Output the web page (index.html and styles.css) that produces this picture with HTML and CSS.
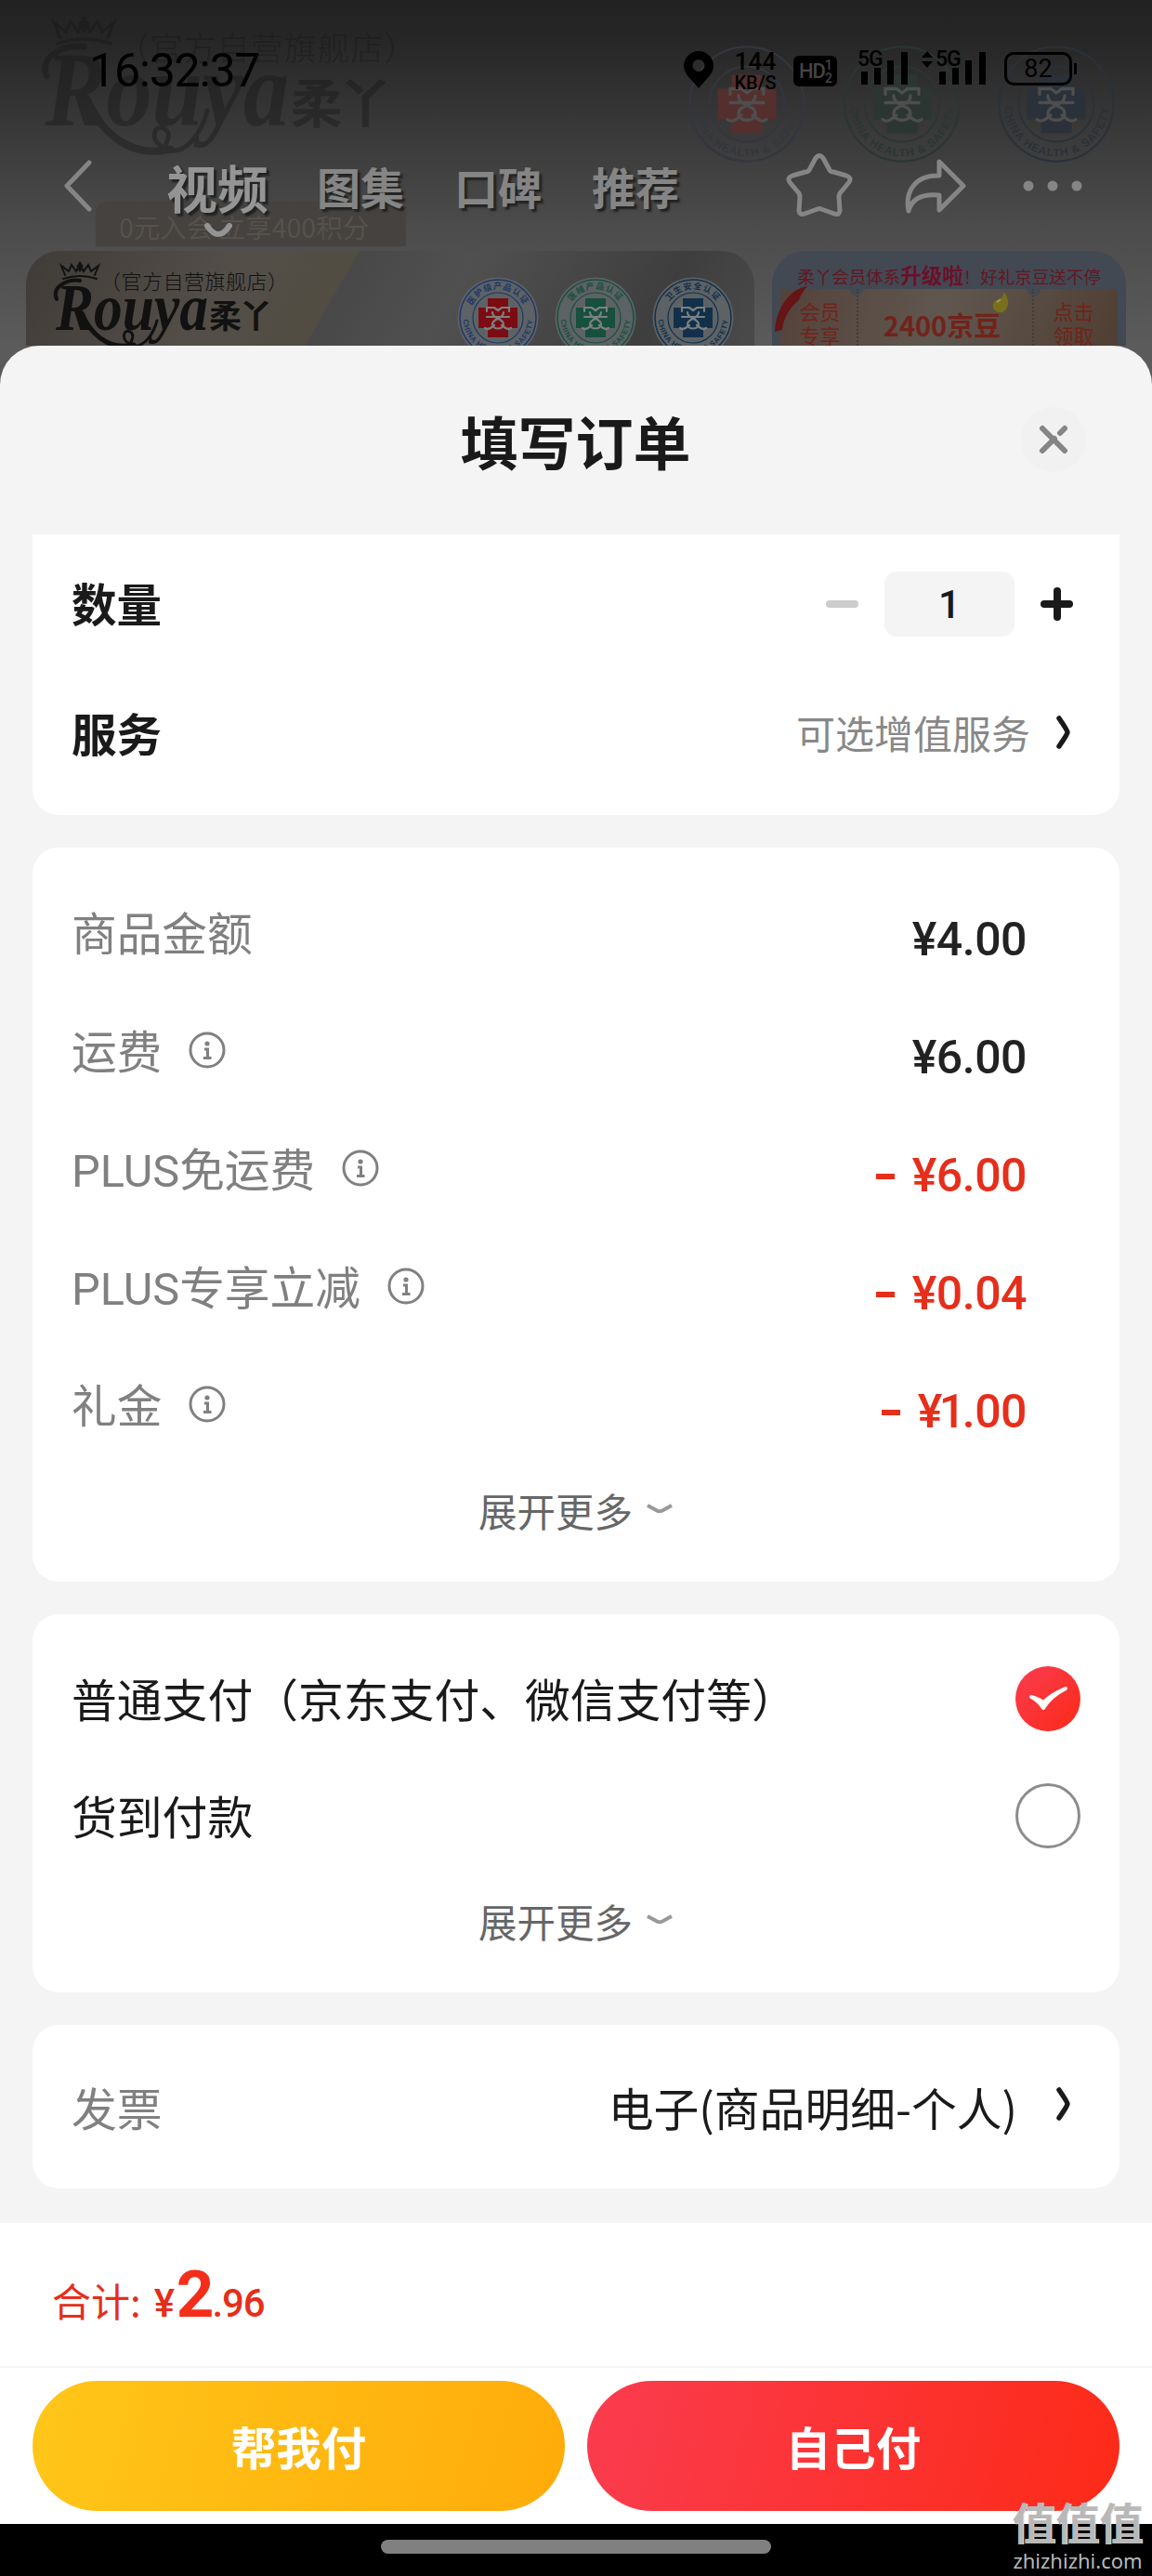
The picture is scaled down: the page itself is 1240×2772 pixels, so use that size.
FILE: index.html
```html
<!DOCTYPE html>
<html lang="zh-CN">
<head>
    <meta charset="UTF-8">
    <meta name="viewport" content="width=device-width, initial-scale=1.0">
    <title>填写订单</title>
    <link rel="stylesheet" href="styles.css">
</head>
<body>
    <svg class="defs" width="0" height="0">
        <defs>
            <path id="arcTop" d="M13 44a31 31 0 0 1 62 0"/>
            <path id="arcBottom" d="M6.500 44a37.500 37.500 0 0 0 75 0"/>
            <symbol id="badge" viewBox="0 0 88 88">
                <circle class="badge-disc" cx="44" cy="44" r="43.500"/>
                <circle cx="44" cy="44" r="41" fill="none" stroke="currentColor" stroke-width="1.500"/>
                <circle cx="44" cy="44" r="27" fill="none" stroke="currentColor" stroke-width="1.200"/>
                <path class="badge-cross" d="M33 23h22v10h10v22H55v10H33V55H23V33h10z"/>
                <path class="badge-mark" d="M32 37v-4h8l4 3 4-3h8v4M32 43h24M38 38c0 8 12 6 12 13 0 6-12 6-12 0 0-7 12-5 12-13M30 55c4 3 7-1 10-3M58 55c-4 3-7-1-10-3"/>
                <text class="badge-en"><textPath href="#arcBottom" startOffset="50%" text-anchor="middle">CHINA HEALTH &amp; SAFETY</textPath></text>
            </symbol>
            <symbol id="logo" viewBox="0 0 250 110">
                <g fill="none" stroke="currentColor" stroke-width="2" stroke-linecap="round">
                    <path d="M16 20q18-6 36 0M18 16l-4-10 8 6 3-7 5 7 4-8 4 8 5-7 3 7 8-6-4 10"/>
                    <path d="M34 3v8M32 6h4" stroke-width="3"/>
                    <path d="M36 57C44 76 62 98 92 91" stroke-width="5"/>
                    <path d="M92 91c-15-2-12-18-4-14 8 5-4 14 3 15 12 2 22-12 26-27" stroke-width="3"/>
                    <path d="M9 42C3 28 22 20 34 22" stroke-width="4"/>
                </g>
                <text class="logo-en" x="8" y="75" textLength="164" lengthAdjust="spacingAndGlyphs">Rouya</text>
                <text class="logo-cn" x="173" y="73">柔丫</text>
                <text class="logo-shop" x="56" y="31" textLength="202">（官方自营旗舰店）</text>
            </symbol>
            <symbol id="info" viewBox="0 0 40 40">
                <circle cx="20" cy="20" r="18" fill="none" stroke="#808080" stroke-width="3"/>
                <circle cx="20" cy="13" r="2.600" fill="#808080"/>
                <path d="M17 19h3.500v9M16 28.500h8.500" fill="none" stroke="#808080" stroke-width="3"/>
            </symbol>
            <symbol id="right" viewBox="0 0 18 38">
                <path d="M4 4q9 13 9 15t-9 15" fill="none" stroke="#1a1a1a" stroke-width="5.500" stroke-linecap="round"/>
            </symbol>
            <symbol id="down" viewBox="0 0 30 14">
                <path d="M2 3l10 5.500q3 1.500 6 0L28 3" fill="none" stroke="#999" stroke-width="4"/>
            </symbol>
        </defs>
    </svg>

    <div class="page">
        <div class="shop">
            <!-- faded enlarged banner behind the navigation -->
            <div class="ghost">
                <svg class="ghost-logo"><use href="#logo"/></svg>
                <svg class="ghost-badge first red"><use href="#badge"/></svg>
                <svg class="ghost-badge second green"><use href="#badge"/></svg>
                <svg class="ghost-badge third blue"><use href="#badge"/></svg>
                <div class="ghost-pill">0元入会 立享400积分</div>
            </div>

            <div class="status-bar">
                <span class="clock">16:32:37</span>
                <div class="status-icons">
                    <svg class="pin" width="32" height="40" viewBox="0 0 32 40"><path fill-rule="evenodd" d="M16 0a16 16 0 0 1 16 16c0 9-9 15-16 24C9 31 0 25 0 16A16 16 0 0 1 16 0zm0 9a6.500 6.500 0 1 0 0 13 6.500 6.500 0 0 0 0-13z"/></svg>
                    <div class="speed"><b>144</b><span>KB/S</span></div>
                    <div class="hd"><span>HD</span><small>1<br>2</small></div>
                    <div class="signal">
                        <span>5G</span>
                        <svg width="50" height="35" viewBox="0 0 50 35"><path d="M0 21h7v14H0zM14 17h7v18h-7zM28 9h7v26h-7zM43 0h7v35h-7z"/></svg>
                    </div>
                    <div class="signal second-sim">
                        <svg class="updown" width="12" height="18" viewBox="0 0 12 18"><path d="M0 7l6-7 6 7zM0 11h12l-6 7z"/></svg>
                        <span>5G</span>
                        <svg width="50" height="35" viewBox="0 0 50 35"><path d="M0 21h7v14H0zM14 17h7v18h-7zM28 9h7v26h-7zM43 0h7v35h-7z"/></svg>
                    </div>
                    <div class="battery">82</div>
                </div>
            </div>

            <div class="nav">
                <svg class="back" width="32" height="56" viewBox="0 0 32 56"><path d="M28 3L4 28l24 25"/></svg>
                <div class="tab active">视频<svg width="30" height="16" viewBox="0 0 30 16"><path d="M3 3q12 18 24 0"/></svg></div>
                <div class="tab">图集</div>
                <div class="tab">口碑</div>
                <div class="tab">推荐</div>
                <svg class="star" width="72" height="70" viewBox="0 0 72 70"><path d="M32 6q4-5 8 0l7 13q1 2 4 2l14 4q6 2 3 7L58 44q-1 2-1 4l1 15q-1 5-6 3l-14-5q-2-1-4 0l-14 5q-5 2-6-3l1-15q0-2-1-4L4 32q-3-5 3-7l14-4q3 0 4-2z"/></svg>
                <svg class="share" width="68" height="60" viewBox="0 0 68 60"><path d="M38 4l26 26-26 26V40C18 38 8 45 5 57 1 36 12 18 38 19z"/></svg>
                <svg class="more" width="64" height="12" viewBox="0 0 64 12"><circle cx="6" cy="6" r="5.500"/><circle cx="32" cy="6" r="5.500"/><circle cx="58" cy="6" r="5.500"/></svg>
            </div>

            <div class="banners">
                <div class="banner brand">
                    <svg class="brand-logo"><use href="#logo"/></svg>
                    <svg class="badge red" viewBox="0 0 88 88"><use href="#badge" width="88" height="88"/><text class="badge-cn"><textPath href="#arcTop" startOffset="50%" text-anchor="middle">医护级产品认证</textPath></text></svg>
                    <svg class="badge green" viewBox="0 0 88 88"><use href="#badge" width="88" height="88"/><text class="badge-cn"><textPath href="#arcTop" startOffset="50%" text-anchor="middle">医械产品认证</textPath></text></svg>
                    <svg class="badge blue" viewBox="0 0 88 88"><use href="#badge" width="88" height="88"/><text class="badge-cn"><textPath href="#arcTop" startOffset="50%" text-anchor="middle">卫生安全认证</textPath></text></svg>
                </div>
                <div class="banner coupon">
                    <div class="coupon-title">柔丫会员体系<b>升级啦</b>！好礼京豆送不停</div>
                    <div class="ticket">
                        <svg class="ribbon" width="38" height="52" viewBox="0 0 38 52"><path d="M1 50C2 26 16 4 36 1c-4 5-7 9-9 15C16 25 10 36 9 48z" fill="#651515"/></svg>
                        <div class="ticket-side">会员<br>专享</div>
                        <div class="ticket-main">2400京豆</div>
                        <div class="ticket-side">点击<br>领取</div>
                        <svg class="bean" width="18" height="24" viewBox="0 0 18 24"><path d="M12 1c7 7 7 18-1 22C2 25-3 15 4 10c5 0 8-3 8-9z" fill="#79701b"/><path d="M5 12q2-1 4-3" stroke="#a19a55" stroke-width="2"/></svg>
                    </div>
                </div>
            </div>
        </div>

        <div class="sheet">
            <div class="sheet-header">
                <h1>填写订单</h1>
                <button class="close">
                    <svg width="32" height="32" viewBox="0 0 32 32"><path d="M4 4l24 24M4 28l13-13M23 9l5-5"/></svg>
                </button>
            </div>

            <div class="card goods">
                <div class="row">
                    <span class="label-bold">数量</span>
                    <div class="stepper">
                        <i class="minus"></i>
                        <span class="count">1</span>
                        <i class="plus"></i>
                    </div>
                </div>
                <div class="row">
                    <span class="label-bold">服务</span>
                    <div class="link"><span class="hint">可选增值服务</span><svg class="right"><use href="#right"/></svg></div>
                </div>
            </div>

            <div class="card fees">
                <div class="fee"><span>商品金额</span><b>¥4.00</b></div>
                <div class="fee"><span>运费</span><svg class="info"><use href="#info"/></svg><b>¥6.00</b></div>
                <div class="fee"><span>PLUS免运费</span><svg class="info"><use href="#info"/></svg><b class="minus-price"><i></i>¥6.00</b></div>
                <div class="fee"><span>PLUS专享立减</span><svg class="info"><use href="#info"/></svg><b class="minus-price"><i></i>¥0.04</b></div>
                <div class="fee"><span>礼金</span><svg class="info"><use href="#info"/></svg><b class="minus-price one"><i></i>¥<em>1</em>.00</b></div>
                <div class="expand">展开更多<svg><use href="#down"/></svg></div>
            </div>

            <div class="card payment">
                <div class="pay">
                    <span>普通支付（京东支付、微信支付等）</span>
                    <svg class="checked" width="70" height="70" viewBox="0 0 70 70">
                        <defs><linearGradient id="checkFill" x1="0" x2="1" y2="1"><stop offset="0" stop-color="#fa3c50"/><stop offset="1" stop-color="#fc2a18"/></linearGradient></defs>
                        <circle cx="35" cy="35" r="35" fill="url(#checkFill)"/>
                        <path d="M17 33q8 4 13 12 8-13 24-21-15 6-24 15-5-4-13-6z" fill="#fff" stroke="#fff" stroke-width="4" stroke-linejoin="round"/>
                    </svg>
                </div>
                <div class="pay"><span>货到付款</span><i class="radio"></i></div>
                <div class="expand">展开更多<svg><use href="#down"/></svg></div>
            </div>

            <div class="card invoice">
                <span class="invoice-label">发票</span>
                <div class="link"><span>电子(商品明细-个人)</span><svg class="right"><use href="#right"/></svg></div>
            </div>
        </div>

        <div class="total"><span>合计:</span><small>¥</small><strong>2</strong><small>.96</small></div>
        <div class="actions">
            <button class="btn friend">帮我付</button>
            <button class="btn self">自己付</button>
        </div>
        <div class="home-bar"><i></i></div>

        <div class="watermark"><b>值值值</b><span>zhizhizhi.com</span></div>
    </div>
</body>
</html>
```
FILE: styles.css
```css
* {
    box-sizing: border-box;
}

body {
    margin: 0;
    background: #000;
    color: #1a1a1a;
    font-family: "Noto Sans CJK SC", sans-serif;
}

i, em {
    font-style: normal;
}

button {
    border: none;
    padding: 0;
    font-family: inherit;
}

.defs {
    position: absolute;
}

.page {
    position: relative;
    width: 1240px;
    height: 2772px;
    overflow: hidden;
    display: flex;
    flex-direction: column;
}

/* dimmed shop page */
.shop {
    position: relative;
    height: 372px;
    flex: none;
    background: linear-gradient(#222 0, #262626 40px, #393939 140px, #4b4b4b 240px, #5b5b5b 372px);
}

.red {
    --cross: #7d0c12;
    color: #1d3868;
}

.green {
    color: #17503c;
}

.blue {
    color: #12304a;
}

.badge-disc {
    fill: var(--disc, #5d6265);
}

.badge-cross {
    fill: var(--cross, currentColor);
}

.badge-mark {
    fill: none;
    stroke: var(--mark, #7c8082);
    stroke-width: 2.2;
    stroke-linecap: round;
}

.badge-en {
    font: bold 8px "Liberation Sans", sans-serif;
    fill: currentColor;
    letter-spacing: 0.6px;
}

.badge-cn {
    font-size: 9px;
    font-weight: bold;
    fill: currentColor;
    letter-spacing: 1px;
}

.logo-en {
    font: italic bold 72px "Liberation Serif", serif;
    fill: currentColor;
}

.logo-cn {
    font-size: 35px;
    font-weight: bold;
    fill: currentColor;
    letter-spacing: -2px;
}

.logo-shop {
    font-size: 22px;
    font-weight: 300;
    fill: currentColor;
}

.ghost svg, .ghost-pill {
    position: absolute;
}

.ghost-logo {
    left: 36px;
    top: 15px;
    width: 400px;
    height: 176px;
    color: #161616;
    opacity: 0.4;
}

.ghost-badge {
    --disc: none;
    --mark: #4e4e4e;
    top: 46px;
    width: 132px;
    height: 132px;
}

.ghost-badge.first {
    --cross: #542f2e;
    left: 738px;
    color: #34363f;
}

.ghost-badge.second {
    left: 905px;
    color: #2b3632;
}

.ghost-badge.third {
    left: 1071px;
    color: #2a3138;
}

.ghost-pill {
    left: 103px;
    top: 217px;
    width: 334px;
    height: 48px;
    padding-left: 25px;
    border-radius: 14px 14px 0 0;
    background: #45423f;
    color: #55514c;
    font-size: 28.500px;
    line-height: 54px;
    white-space: nowrap;
}

.status-bar {
    position: relative;
    display: flex;
    height: 98px;
    padding: 50px 86px 0 96px;
}

.clock {
    flex: 1;
    font-family: Roboto, sans-serif;
    font-size: 50px;
    line-height: 52px;
    letter-spacing: -1.2px;
    color: #000;
}

.status-icons {
    display: flex;
    align-items: flex-start;
    color: #000;
    font-family: Roboto, sans-serif;
}

.pin {
    margin-top: 5px;
}

.speed {
    width: 50px;
    margin: 2px 0 0 20px;
    text-align: center;
}

.speed b {
    display: block;
    font-size: 26px;
    font-weight: 500;
    line-height: 28px;
}

.speed span {
    display: block;
    font-size: 20px;
    line-height: 18px;
    font-weight: 500;
}

.hd {
    display: flex;
    align-items: center;
    justify-content: center;
    width: 47px;
    height: 33px;
    margin: 10px 22px 0 16px;
    border-radius: 6px;
    background: #000;
    color: #444;
    font-size: 22px;
    font-weight: 500;
    letter-spacing: -1px;
}

.hd small {
    font-size: 14px;
    line-height: 14px;
}

.signal {
    position: relative;
    width: 54px;
    height: 43px;
    padding: 6px 0 0 4px;
}

.signal span {
    position: absolute;
    left: 0;
    top: 2px;
    font-size: 23px;
    font-weight: 500;
    line-height: 24px;
    letter-spacing: -1px;
}

.second-sim {
    margin: 0 20px 0 30px;
}

.updown {
    position: absolute;
    left: -15px;
    top: 5px;
}

.battery {
    position: relative;
    width: 73px;
    height: 36px;
    margin-top: 6px;
    border: 3px solid #000;
    border-radius: 10px;
    font-size: 27px;
    line-height: 31px;
    text-align: center;
}

.battery::after {
    content: "";
    position: absolute;
    right: -8px;
    top: 9px;
    width: 3px;
    height: 12px;
    background: #000;
}

.nav {
    position: relative;
    display: flex;
    align-items: center;
    height: 172px;
    padding: 32px 0 0 68px;
    fill: none;
    stroke: #858585;
    stroke-width: 5;
    stroke-linecap: round;
    stroke-linejoin: round;
}

.nav > * {
    flex: none;
}

.tab {
    stroke: none;
    margin-right: 54px;
    font-size: 47px;
    font-weight: bold;
    line-height: 70px;
    color: #858585;
    text-shadow: 3px 3px 2px #222;
}

.tab.active {
    position: relative;
    margin: 0 52px 0 79px;
    font-size: 55px;
    color: #949494;
}

.tab.active svg {
    position: absolute;
    left: 41px;
    top: 75px;
    stroke: #949494;
    stroke-width: 6;
}

.star {
    margin: -2px 55px 0 61px;
}

.share {
    margin-right: 60px;
}

.more {
    fill: #858585;
    stroke: none;
}

.banners {
    position: relative;
    display: flex;
    gap: 19px;
    height: 102px;
    padding: 0 28px;
}

.banner {
    height: 150px;
    border-radius: 36px;
}

.brand {
    display: flex;
    flex: none;
    width: 784px;
    background: linear-gradient(120deg, #3f3b38 0, #534e48 200px, #524d42 310px, #484849 312px, #505050 420px, #3e3e3e 620px, #4d4d4d);
}

.brand-logo {
    width: 250px;
    height: 110px;
    margin: 10px 190px 0 24px;
    color: #111;
}

.badge {
    width: 88px;
    height: 88px;
    margin: 28px 17px 0 0;
}

.coupon {
    width: 381px;
    background: #424953;
    padding: 0 9px;
}

.coupon-title {
    height: 41px;
    padding-top: 8px;
    text-align: center;
    white-space: nowrap;
    font-size: 18.500px;
    line-height: 34px;
    color: #651622;
}

.coupon-title b {
    font-size: 22.500px;
    color: #6b1029;
}

.ticket {
    position: relative;
    display: flex;
    height: 100px;
    background:
        radial-gradient(circle at 82px 0, #424953 7px, transparent 8px),
        radial-gradient(circle at 273px 0, #424953 7px, transparent 8px),
        linear-gradient(110deg, #54423a, #5f574f 45%, #4f3d31);
    color: #71231a;
}

.ticket-side {
    width: 82px;
    padding: 10px 0 0 3px;
    text-align: center;
    font-size: 22px;
    line-height: 26px;
}

.ticket-main {
    width: 191px;
    padding-right: 7px;
    border: dotted #453b34;
    border-width: 0 2px;
    text-align: center;
    white-space: nowrap;
    font-size: 29px;
    font-weight: bold;
    line-height: 76px;
}

.ribbon {
    position: absolute;
    left: -7px;
    top: -4px;
}

.bean {
    position: absolute;
    left: 228px;
    top: 2px;
}

/* order sheet */
.sheet {
    position: relative;
    flex: none;
    height: 2020px;
    padding: 0 35px;
    background: #f4f4f4;
}

.sheet::before {
    content: "";
    position: absolute;
    left: 0;
    right: 0;
    top: 0;
    height: 42px;
    background: #5b5b5b;
}

.sheet-header {
    position: relative;
    display: flex;
    align-items: center;
    justify-content: center;
    height: 203px;
    margin: 0 -35px;
    border-radius: 42px 42px 0 0;
    background: #f4f4f4;
}

h1 {
    margin: 0 1px 0 0;
    font-size: 62px;
    line-height: 90px;
}

.close {
    position: absolute;
    right: 71px;
    top: 66px;
    width: 70px;
    height: 70px;
    display: flex;
    align-items: center;
    justify-content: center;
    border-radius: 50%;
    background: #f1f1f1;
    fill: none;
    stroke: #858585;
    stroke-width: 6;
    stroke-linecap: round;
}

.card {
    margin-bottom: 35px;
    border-radius: 28px;
    background: #fff;
}

.goods {
    height: 302px;
    padding: 5px 43px 0 42px;
    border-radius: 0 0 28px 28px;
}

.row {
    display: flex;
    align-items: center;
    justify-content: space-between;
    height: 140px;
}

.label-bold {
    margin-top: -5px;
    font-size: 48.500px;
    font-weight: bold;
}

.stepper {
    display: flex;
    align-items: center;
    margin-right: 7px;
}

.minus, .plus {
    width: 35px;
    height: 8px;
    border-radius: 4px;
    background: #ccc;
}

.plus {
    position: relative;
    background: #1a1a1a;
}

.plus::after {
    content: "";
    position: absolute;
    left: 14px;
    top: -14px;
    width: 8px;
    height: 36px;
    border-radius: 4px;
    background: #1a1a1a;
}

.count {
    width: 140px;
    height: 70px;
    margin: 0 28px;
    border-radius: 13px;
    background: #f4f4f4;
    font: 500 42px/72px Roboto, sans-serif;
    text-align: center;
}

.link {
    display: flex;
    align-items: center;
}

.hint {
    margin-top: -5px;
    font-size: 42px;
    color: #888;
}

.right {
    width: 18px;
    height: 38px;
    margin: -4px 8px 0 27px;
}

.fees {
    height: 790px;
    padding: 31px 100px 0 42px;
}

.fee {
    display: flex;
    align-items: center;
    height: 127px;
    color: #808080;
    font: 48.700px/127px Roboto, "Noto Sans CJK SC", sans-serif;
}

.info {
    width: 40px;
    height: 40px;
    margin: -7px 0 0 29px;
}

.fee b {
    margin-left: auto;
    padding-top: 10px;
    font-size: 50px;
    font-weight: 500;
    letter-spacing: -0.500px;
    color: #222;
}

.fee .minus-price {
    display: flex;
    align-items: center;
    color: #e62e1a;
}

.minus-price i {
    width: 20px;
    height: 6px;
    margin-right: 19px;
    background: #e62e1a;
}

.minus-price em {
    margin-left: -3px;
    margin-right: -3px;
}

.expand {
    display: flex;
    align-items: center;
    justify-content: center;
    color: #666;
    font-size: 41.500px;
    line-height: 60px;
}

.expand svg {
    width: 30px;
    height: 14px;
    margin: -2px 0 0 14px;
}

.fees .expand {
    margin: 17px -58px 0 0;
}

.payment {
    height: 407px;
    padding: 28px 42px 0 42px;
}

.pay {
    display: flex;
    align-items: center;
    justify-content: space-between;
    height: 126px;
    font-size: 48.800px;
}

.pay span {
    margin-top: -3px;
}

.radio {
    width: 70px;
    height: 70px;
    border: 3px solid #8c8c8c;
    border-radius: 50%;
}

.payment .expand {
    margin-top: 20px;
}

.invoice {
    display: flex;
    align-items: center;
    justify-content: space-between;
    height: 176px;
    padding: 0 43px 2px 42px;
    margin: 0;
    font-size: 48.800px;
}

.invoice .right {
    margin-left: 41px;
}

.invoice-label {
    color: #808080;
}

.total {
    display: flex;
    align-items: baseline;
    flex: none;
    height: 156px;
    padding: 27px 56px 0;
    background: #fff;
    border-bottom: 2px solid #f5f5f5;
    color: #e62e1a;
    line-height: 100px;
}

.total span {
    margin-right: 14px;
    font-size: 42px;
}

.total small, .total strong {
    font-family: Roboto, sans-serif;
    font-size: 42px;
    font-weight: 500;
    letter-spacing: -1.2px;
}

.total strong {
    margin: 0 3px;
    font-size: 71px;
    font-weight: bold;
    letter-spacing: -5px;
    color: #f42e1a;
}

.actions {
    display: flex;
    flex: none;
    gap: 24px;
    height: 168px;
    padding: 14px 35px;
    background: #fff;
}

.btn {
    flex: 1;
    height: 140px;
    border-radius: 70px;
    color: #fff;
    font-size: 48.500px;
    font-weight: bold;
}

.friend {
    background: linear-gradient(105deg, #ffc619, #ffab09);
}

.self {
    background: linear-gradient(105deg, #fa3c4f, #fd2a17);
}

.home-bar {
    flex: 1;
    background: #000;
}

.home-bar i {
    display: block;
    width: 420px;
    height: 15px;
    margin: 17px auto 0;
    border-radius: 8px;
    background: #808080;
}

.watermark {
    position: absolute;
    right: 8px;
    bottom: 0;
    width: 144px;
    color: #b8b8b8;
    text-align: center;
}

.watermark b {
    display: block;
    font-size: 47px;
    line-height: 50px;
    white-space: nowrap;
    text-shadow: 1px 0 0 #ddd;
}

.watermark span {
    display: block;
    font: 22px/34px "Noto Sans", sans-serif;
}
```
